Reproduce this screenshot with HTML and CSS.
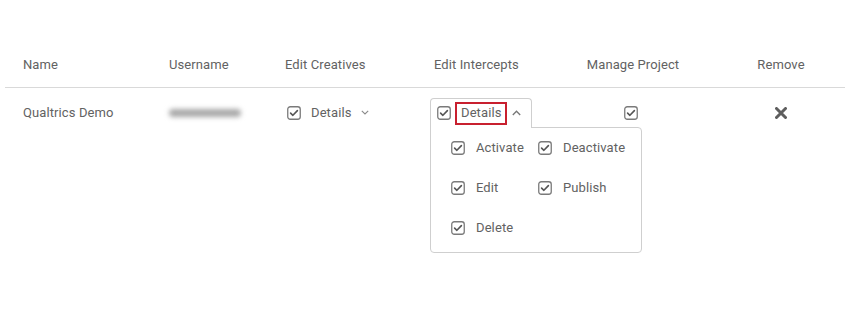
FILE: index.html
```html
<!DOCTYPE html>
<html lang="en">
<head>
  <meta charset="UTF-8">
  <title>Project permissions</title>
  <link rel="stylesheet" href="styles.css">
</head>
<body>
  <div class="perm-table">
    <div class="perm-row perm-head">
      <div class="cell">Name</div>
      <div class="cell">Username</div>
      <div class="cell">Edit Creatives</div>
      <div class="cell">Edit Intercepts</div>
      <div class="cell center">Manage Project</div>
      <div class="cell center last">Remove</div>
    </div>
    <div class="perm-row perm-body">
      <div class="cell">Qualtrics Demo</div>
      <div class="cell"><span class="blurred"></span></div>
      <div class="cell">
        <span class="details">
          <svg class="cb" width="14" height="14" viewBox="0 0 14 14"><rect x="0.75" y="0.75" width="12.5" height="12.5" rx="2.5"/><path d="M3.6 7.1 L5.9 9.3 L10.4 4.6"/></svg>
          <span class="details-label">Details</span>
          <svg class="chev" width="8" height="5" viewBox="0 0 8 5"><path d="M0.8 0.8 L4 4 L7.2 0.8"/></svg>
        </span>
      </div>
      <div class="cell dropdown-cell">
        <div class="dropdown">
          <div class="dropdown-btn">
            <svg class="cb" width="14" height="14" viewBox="0 0 14 14"><rect x="0.75" y="0.75" width="12.5" height="12.5" rx="2.5"/><path d="M3.6 7.1 L5.9 9.3 L10.4 4.6"/></svg>
            <span class="highlight">Details</span>
            <svg class="chev up" width="9" height="6" viewBox="0 0 9 6"><path d="M0.8 5 L4.5 1.2 L8.2 5"/></svg>
          </div>
          <div class="dropdown-panel">
            <label class="opt"><svg class="cb" width="14" height="14" viewBox="0 0 14 14"><rect x="0.75" y="0.75" width="12.5" height="12.5" rx="2.5"/><path d="M3.6 7.1 L5.9 9.3 L10.4 4.6"/></svg>Activate</label>
            <label class="opt"><svg class="cb" width="14" height="14" viewBox="0 0 14 14"><rect x="0.75" y="0.75" width="12.5" height="12.5" rx="2.5"/><path d="M3.6 7.1 L5.9 9.3 L10.4 4.6"/></svg>Deactivate</label>
            <label class="opt"><svg class="cb" width="14" height="14" viewBox="0 0 14 14"><rect x="0.75" y="0.75" width="12.5" height="12.5" rx="2.5"/><path d="M3.6 7.1 L5.9 9.3 L10.4 4.6"/></svg>Edit</label>
            <label class="opt"><svg class="cb" width="14" height="14" viewBox="0 0 14 14"><rect x="0.75" y="0.75" width="12.5" height="12.5" rx="2.5"/><path d="M3.6 7.1 L5.9 9.3 L10.4 4.6"/></svg>Publish</label>
            <label class="opt"><svg class="cb" width="14" height="14" viewBox="0 0 14 14"><rect x="0.75" y="0.75" width="12.5" height="12.5" rx="2.5"/><path d="M3.6 7.1 L5.9 9.3 L10.4 4.6"/></svg>Delete</label>
          </div>
        </div>
      </div>
      <div class="cell center">
        <svg class="cb manage" width="14" height="14" viewBox="0 0 14 14"><rect x="0.75" y="0.75" width="12.5" height="12.5" rx="2.5"/><path d="M3.6 7.1 L5.9 9.3 L10.4 4.6"/></svg>
      </div>
      <div class="cell center last">
        <svg class="remove" width="12" height="12" viewBox="0 0 12 12"><path d="M1.5 1.5 L10.5 10.5 M10.5 1.5 L1.5 10.5"/></svg>
      </div>
    </div>
  </div>
</body>
</html>
```

FILE: styles.css
```css
/* base */
body { margin: 0; background: #fff; font-family: Roboto, "Liberation Sans", sans-serif; font-size: 13px; letter-spacing: 0.1px; color: #626262; }
.perm-table { margin: 0 5px; }
.perm-row { display: grid; grid-template-columns: 146px 116px 149px 131px 136px 1fr; padding-left: 18px; line-height: 16px; }
.perm-head { padding-top: 57px; padding-bottom: 14px; border-bottom: 1px solid #d9d9d9; align-items: center; }
.perm-body { padding-top: 10px; align-items: start; }
.perm-body .cell { display: flex; align-items: center; height: 29px; }
.cell.center { display: flex; justify-content: center; }
.cell.last { padding-left: 16px; }
.perm-body .dropdown-cell { height: auto; }
/* checkbox / icons */
svg { display: block; }
.cb rect { fill: #fff; stroke: #7a7a7a; stroke-width: 1.3; }
.cb path { fill: none; stroke: #555; stroke-width: 1.6; stroke-linecap: round; stroke-linejoin: round; }
.cb.manage { margin-right: 4px; }
.chev path { fill: none; stroke: #8a8a8a; stroke-width: 1.1; }
.chev.up path { stroke: #777; stroke-width: 1.3; }
.remove path { stroke: #5e5e5e; stroke-width: 3; stroke-linecap: round; }
.blurred { display: block; width: 72px; height: 8px; border-radius: 4px; background: #a9a9a9; filter: blur(2.5px); }
/* details toggle */
.details { display: flex; align-items: center; margin-left: 2px; }
.details-label { margin: 0 10px; }
/* dropdown */
.dropdown { margin-left: -4px; }
.dropdown-btn { position: relative; z-index: 2; display: flex; align-items: center; width: 102px; height: 30px; box-sizing: border-box; padding: 0 0 1px 6px; border: 1px solid #cfcfcf; border-bottom: 0; border-radius: 4px 4px 0 0; background: #fff; }
.highlight { margin: 0 5px 0 4px; padding: 1px 4px 2px; border: 2px solid #c8202f; }
.dropdown-panel { margin-top: -1px; width: 212px; box-sizing: border-box; padding: 10px 0 14px 20px; border: 1px solid #cfcfcf; border-radius: 0 4px 4px 4px; background: #fff; display: grid; grid-template-columns: 87px 1fr; row-gap: 20px; }
.opt { display: flex; align-items: center; height: 20px; }
.opt .cb { margin-right: 11px; }
```
